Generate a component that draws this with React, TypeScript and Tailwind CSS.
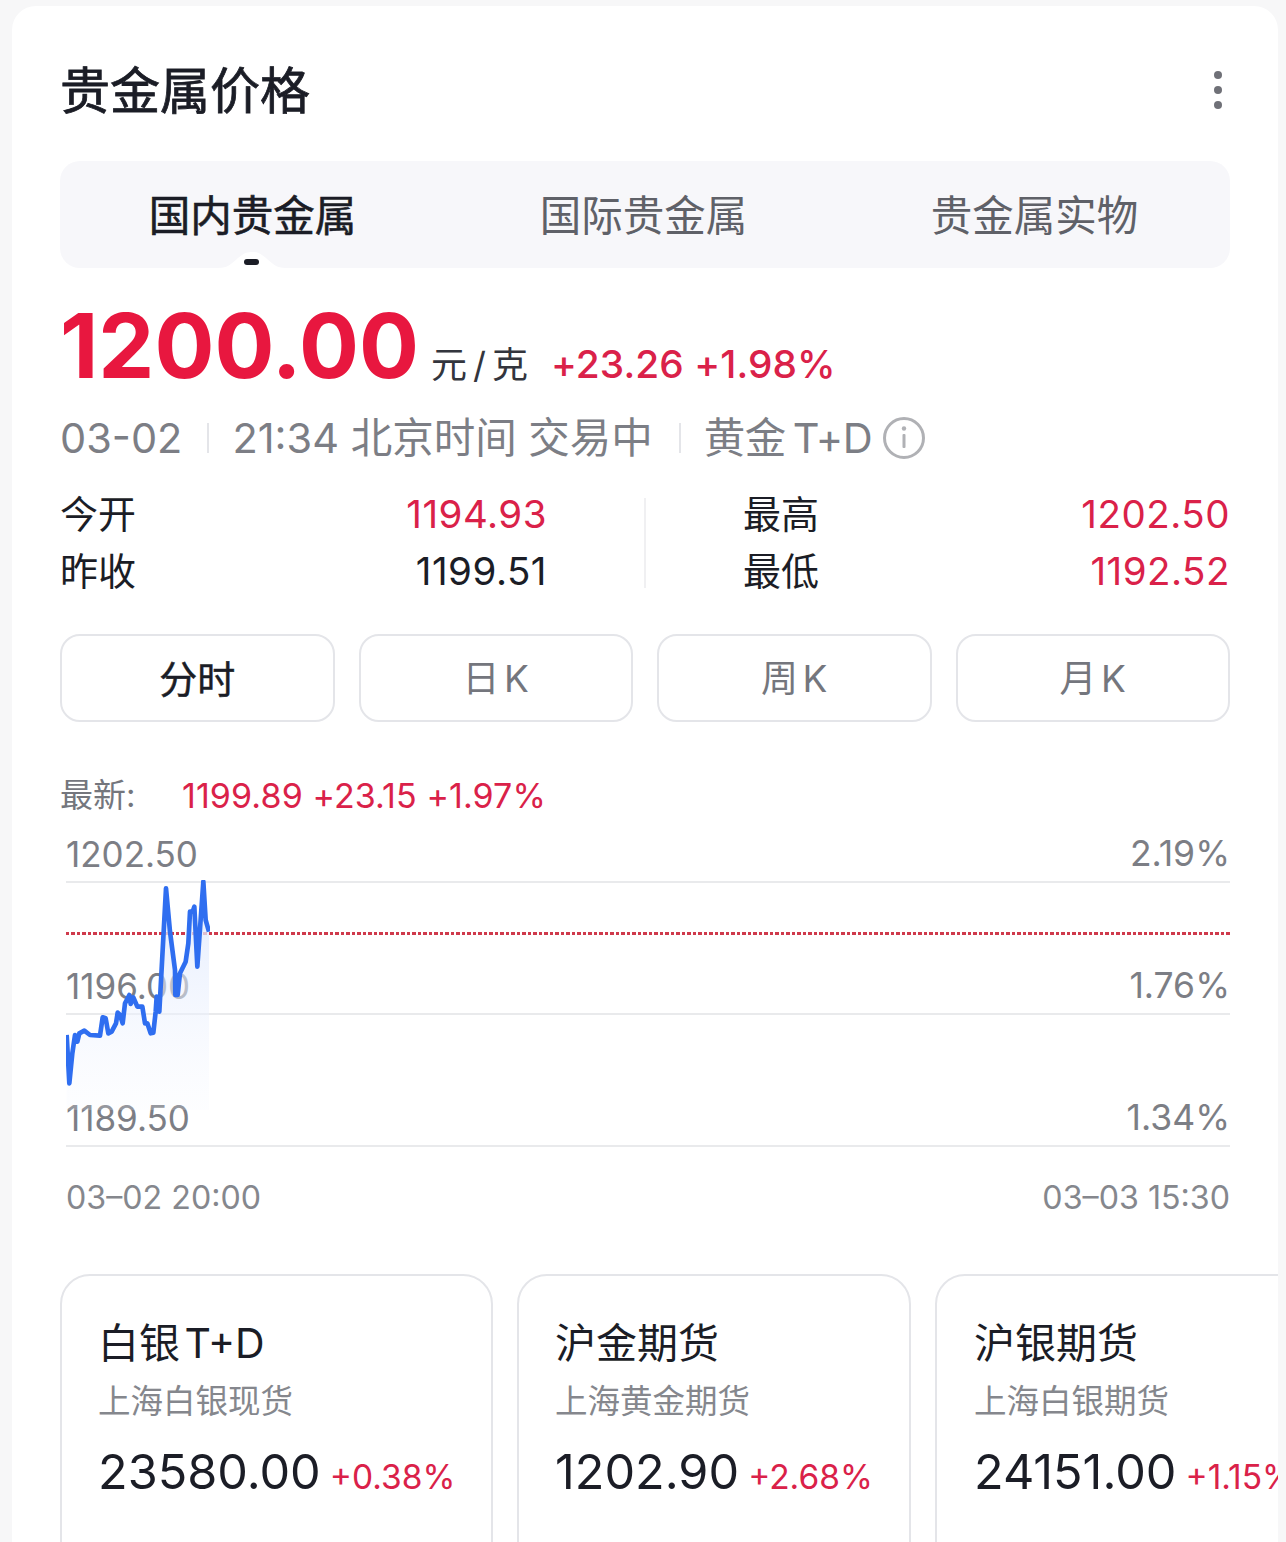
const FONT = "font-['Inter','Noto_Sans_CJK_SC',sans-serif]";

const LINE =
  "80,525 88,670 97,580 105,525 112,545 118,520 133,512 150,525 180,527 188,472 197,475 205,520 215,515 228,490 233,458 240,465 248,490 255,430 268,405 272,432 280,412 292,440 307,440 315,490 322,490 332,520 340,518 347,455 350,410 358,455 378,85 390,215 405,330 406,405 413,405 420,340 437,305 445,250 450,155 458,155 463,140 472,320 490,65 497,180 507,215";

function Stat({ label, value, red }: { label: string; value: string; red?: boolean }) {
  return (
    <div className="flex h-[57px] items-center justify-between">
      <span className="text-[38px] text-[#1b1d26]">{label}</span>
      <span className={`text-[38.5px] tracking-[0.5px] ${red ? "text-[#da2149]" : "text-[#1b1d26]"}`}>{value}</span>
    </div>
  );
}

function RangeButton({ label, active }: { label: string; active?: boolean }) {
  return (
    <div
      className={`flex h-[88px] flex-1 items-center justify-center rounded-[20px] border-2 border-[#e4e5e9] pt-[2px] [word-spacing:-6px] ${
        active ? "text-[38px] text-[#1b1d26] [-webkit-text-stroke:0.5px_#1b1d26]" : "text-[37px] text-[#74767d]"
      }`}
    >
      {label}
    </div>
  );
}

function ChartRow({ left, right, className }: { left: string; right: string; className: string }) {
  return (
    <div
      className={`flex items-end justify-between border-b-2 border-[#e9eaec] pb-[4px] leading-[46px] text-[#7c7e85] ${className}`}
    >
      <span className="text-[35px]">{left}</span>
      <span className="text-[35.5px]">{right}</span>
    </div>
  );
}

function Quote({
  title,
  sub,
  value,
  pct,
  className,
}: {
  title: string;
  sub: string;
  value: string;
  pct: string;
  className: string;
}) {
  return (
    <div className={`h-[300px] shrink-0 rounded-[30px] border-2 border-[#e4e5e9] pt-[38px] ${className}`}>
      <div className="text-[41px] leading-[58px] text-[#1b1d26] [word-spacing:-7px]">{title}</div>
      <div className="mt-[7px] text-[32.5px] leading-[46px] text-[#85878d]">{sub}</div>
      <div className="mt-[15px] flex items-baseline gap-[9px] whitespace-nowrap leading-[64px]">
        <span className="text-[48.6px] text-[#1b1d26]">{value}</span>
        <span className="text-[33.5px] text-[#da2149]">{pct}</span>
      </div>
    </div>
  );
}

export default function App() {
  return (
    <div className={`h-[1542px] w-[1286px] overflow-hidden bg-[#f7f7f8] pt-[6px] pl-[12px] pr-[8px] ${FONT}`}>
      <div className="h-[1536px] overflow-hidden rounded-t-[24px] bg-white pl-[48px]">
        <div className="w-[1170px]">
          {/* header */}
          <div className="flex h-[155px] items-center justify-between pb-[6px] pt-[20px]">
            <h1 className="text-[50px] font-normal leading-none text-[#1b1d26] [-webkit-text-stroke:0.8px_#1b1d26]">
              贵金属价格
            </h1>
            <div className="mb-[2px] mr-[8px] flex flex-col gap-[7px]">
              <span className="h-[8px] w-[8px] rounded-full bg-[#6f7077]" />
              <span className="h-[8px] w-[8px] rounded-full bg-[#6f7077]" />
              <span className="h-[8px] w-[8px] rounded-full bg-[#6f7077]" />
            </div>
          </div>

          {/* tabs */}
          <div className="relative h-[107px] rounded-[20px] bg-[#f7f7fa]">
            <div className="ml-[-3px] grid h-[107px] w-[1173px] grid-cols-3 text-center text-[41.5px] leading-[111px] text-[#5f6168]">
              <div className="text-[#1b1d26] [-webkit-text-stroke:0.6px_#1b1d26]">国内贵金属</div>
              <div>国际贵金属</div>
              <div>贵金属实物</div>
            </div>
            <svg className="absolute left-[158px] top-[89px]" width="68" height="18" viewBox="0 0 68 18">
              <path d="M0 18 C10 18 13 14 20 8 C26 3 29 2 34 2 C39 2 42 3 48 8 C55 14 58 18 68 18 Z" fill="#fff" />
            </svg>
            <span className="absolute left-[184px] top-[98px] h-[6px] w-[15px] rounded-full bg-[#1b1d26]" />
          </div>

          {/* price */}
          <div className="mt-[22px] flex h-[112px] items-baseline whitespace-nowrap">
            <span className="text-[89px] font-bold leading-[112px] text-[#e8173f]">1200.00</span>
            <span className="ml-[12px] text-[36px] tracking-[6px] text-[#33353d]">元/克</span>
            <span className="ml-[17px] text-[38.8px] font-medium tracking-[0.1px] text-[#da2149]">+23.26 +1.98%</span>
          </div>

          {/* meta */}
          <div className="mt-[6px] flex h-[60px] items-center whitespace-nowrap text-[41.5px] text-[#7c7e85]">
            <span>03-02</span>
            <span className="ml-[25px] mr-[23px] h-[30px] w-[2px] bg-[#e4e5e9]" />
            <span>21:34 北京时间 交易中</span>
            <span className="ml-[26px] mr-[23px] h-[30px] w-[2px] bg-[#e4e5e9]" />
            <span className="tracking-[-0.6px] [word-spacing:-4px]">黄金 T+D</span>
            <svg className="ml-[11px]" width="42" height="42" viewBox="0 0 42 42" fill="none">
              <circle cx="21" cy="21" r="19.5" stroke="#b0b1b5" strokeWidth="3" />
              <circle cx="21" cy="11.5" r="2.2" fill="#b0b1b5" />
              <rect x="19.5" y="17" width="3" height="14" rx="1" fill="#b0b1b5" />
            </svg>
          </div>

          {/* stats */}
          <div className="mt-[18px] flex h-[114px] items-center">
            <div className="w-[487px]">
              <Stat label="今开" value="1194.93" red />
              <Stat label="昨收" value="1199.51" />
            </div>
            <div className="ml-[97px] mr-[97px] h-[90px] w-[2px] bg-[#f0f0f2]" />
            <div className="w-[487px]">
              <Stat label="最高" value="1202.50" red />
              <Stat label="最低" value="1192.52" red />
            </div>
          </div>

          {/* range buttons */}
          <div className="mt-[34px] flex gap-[24px]">
            <RangeButton label="分时" active />
            <RangeButton label="日 K" />
            <RangeButton label="周 K" />
            <RangeButton label="月 K" />
          </div>

          {/* latest */}
          <div className="mt-[50px] flex h-[46px] items-center whitespace-nowrap">
            <span className="w-[122px] pt-[2px] text-[33px] text-[#74767d]">最新:</span>
            <span className="text-[34px] tracking-[0.1px] text-[#da2149]">1199.89 +23.15 +1.97%</span>
          </div>

          {/* chart */}
          <div className="relative ml-[6px]">
            <ChartRow className="h-[65px]" left="1202.50" right="2.19%" />
            <ChartRow className="h-[132px]" left="1196.00" right="1.76%" />
            <ChartRow className="h-[132px]" left="1189.50" right="1.34%" />
            <div className="absolute left-0 right-0 top-[114px] h-[3px] bg-[repeating-linear-gradient(90deg,#cf3a4c_0_3.5px,transparent_3.5px_5.5px)]" />
            <svg className="absolute left-0 top-[62px]" width="144" height="230" viewBox="78 60 432 690" fill="none">
              <defs>
                <linearGradient id="area" x1="0" y1="0" x2="0" y2="1">
                  <stop offset="0" stopColor="#dfe9fd" stopOpacity="0.9" />
                  <stop offset="1" stopColor="#f4f7fe" stopOpacity="0.2" />
                </linearGradient>
              </defs>
              <polygon points={`80,750 ${LINE} 507,750`} fill="url(#area)" />
              <polyline points={LINE} stroke="#2f6ef0" strokeWidth="14" strokeLinejoin="round" />
            </svg>
          </div>
          <div className="ml-[6px] mt-[29px] flex h-[44px] items-center justify-between text-[32.2px] text-[#85878d]">
            <span>03–02 20:00</span>
            <span>03–03 15:30</span>
          </div>
        </div>

        {/* quote cards */}
        <div className="mt-[54px] flex gap-[24px]">
          <Quote className="w-[433px] pl-[36px]" title="白银 T+D" sub="上海白银现货" value="23580.00" pct="+0.38%" />
          <Quote className="w-[394px] pl-[36px]" title="沪金期货" sub="上海黄金期货" value="1202.90" pct="+2.68%" />
          <Quote className="w-[433px] pl-[37px]" title="沪银期货" sub="上海白银期货" value="24151.00" pct="+1.15%" />
        </div>
      </div>
    </div>
  );
}
